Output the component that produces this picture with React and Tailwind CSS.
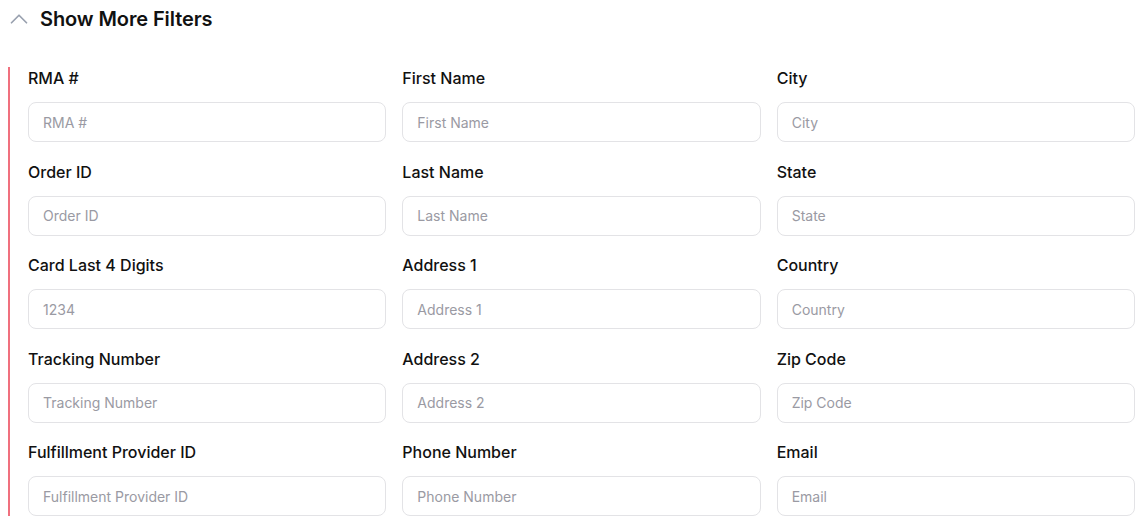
import React from 'react';
import { ChevronUp } from 'lucide-react';

const fields = [
  ['RMA #', 'RMA #'],
  ['First Name', 'First Name'],
  ['City', 'City'],
  ['Order ID', 'Order ID'],
  ['Last Name', 'Last Name'],
  ['State', 'State'],
  ['Card Last 4 Digits', '1234'],
  ['Address 1', 'Address 1'],
  ['Country', 'Country'],
  ['Tracking Number', 'Tracking Number'],
  ['Address 2', 'Address 2'],
  ['Zip Code', 'Zip Code'],
  ['Fulfillment Provider ID', 'Fulfillment Provider ID'],
  ['Phone Number', 'Phone Number'],
  ['Email', 'Email'],
];

export default function App() {
  return (
    <div className="min-h-[524px] bg-white font-['Inter',sans-serif] text-[#111]">
      {/* Header */}
      <div className="flex h-[38px] items-center gap-[6px] pl-[4px]">
        <ChevronUp size={30} strokeWidth={1.4} className="text-gray-400" />
        <h2 className="text-[20px] font-semibold tracking-[-0.1px]">Show More Filters</h2>
      </div>

      {/* Filters */}
      <div className="ml-2 mt-[29px] border-l-2 border-[#f0707e] pl-[18px] pr-[6px]">
        <div className="grid grid-cols-3 gap-x-4 gap-y-[18.5px]">
          {fields.map(([label, placeholder]) => (
            <div key={label} className="flex flex-col">
              <label className="mb-[13px] text-[16px] font-medium leading-[22px]">{label}</label>
              <input
                type="text"
                placeholder={placeholder}
                className="h-10 rounded-lg border border-[#e3e3e6] bg-white px-[14px] text-sm text-gray-700 outline-none placeholder:text-[#9a9aa3]"
              />
            </div>
          ))}
        </div>
      </div>
    </div>
  );
}
